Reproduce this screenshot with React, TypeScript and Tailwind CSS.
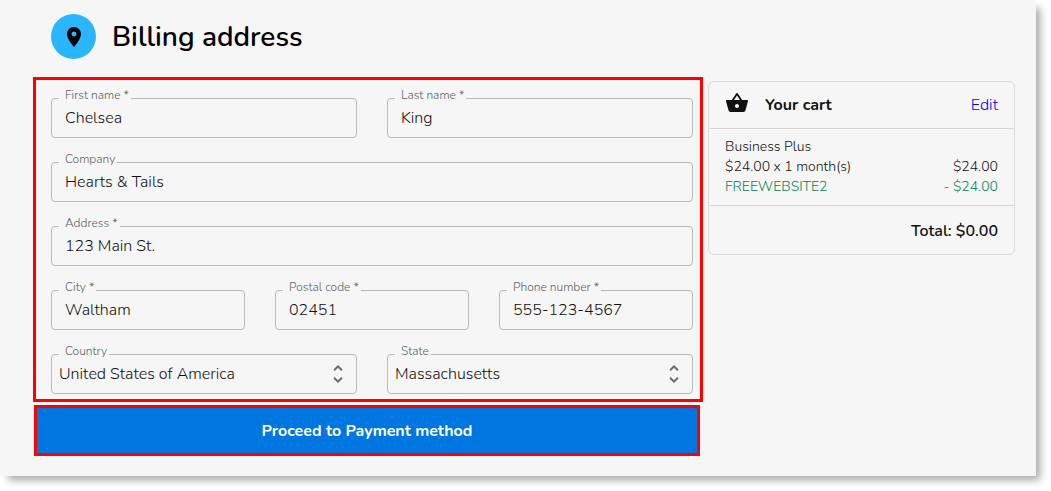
import React from "react";
import { MdLocationOn, MdShoppingBasket, MdUnfoldMore } from "react-icons/md";

interface FieldProps {
  id: string;
  label: string;
  value: string;
  required?: boolean;
  className?: string;
}

const FieldLabel = ({ id, label, required }: { id: string; label: string; required?: boolean }) => (
  <label
    htmlFor={id}
    className="absolute -top-3 left-2 bg-[#f6f6f6] pl-1.5 pr-0.5 text-[12px] leading-[18px] font-light text-[#606060]"
  >
    {label}
    {required && " *"}
  </label>
);

const TextField = ({ id, label, value, required, className = "" }: FieldProps) => (
  <div className={`relative ${className}`}>
    <input
      id={id}
      type="text"
      defaultValue={value}
      className="block h-10 w-full rounded border border-[#b9b9b9] bg-transparent px-[13px] text-base font-light text-[#111] outline-none focus:border-[#0077e0]"
    />
    <FieldLabel id={id} label={label} required={required} />
  </div>
);

const SelectField = ({ id, label, value, className = "" }: FieldProps) => (
  <div className={`relative ${className}`}>
    <select
      id={id}
      defaultValue={value}
      className="block h-10 w-full appearance-none rounded border border-[#b9b9b9] bg-transparent px-[7px] text-base font-light text-[#111] outline-none focus:border-[#0077e0]"
    >
      <option>{value}</option>
    </select>
    <MdUnfoldMore className="pointer-events-none absolute top-2 right-[7px] size-6 text-[#6b6b6b]" />
    <FieldLabel id={id} label={label} />
  </div>
);

const Cart = () => (
  <aside className="mt-1 w-[307px] shrink-0 rounded-md border border-[#dcdcdc] text-[#111]">
    <div className="flex h-[47px] items-center border-b border-[#d6d6d6] px-4">
      <MdShoppingBasket className="mb-1 size-6 text-[#111]" />
      <h2 className="ml-4 flex-1 text-base font-bold">Your cart</h2>
      <a href="#cart" className="text-base font-light text-[#0000ee]">
        Edit
      </a>
    </div>

    <div className="border-b border-[#d6d6d6] px-4 py-2 text-sm leading-5 font-light">
      <p>Business Plus</p>
      <p className="flex justify-between">
        <span>$24.00 x 1 month(s)</span>
        <span>$24.00</span>
      </p>
      <p className="flex justify-between text-[#008552]">
        <span>FREEWEBSITE2</span>
        <span>- $24.00</span>
      </p>
    </div>

    <p className="px-4 pt-[13px] pb-[11px] text-right text-base leading-6 font-semibold">Total: $0.00</p>
  </aside>
);

const App = () => {
  return (
    <div className="bg-white pr-[15px] pb-[15px] font-['Nunito','Open_Sans',sans-serif]">
      <main className="bg-[#f6f6f6] pt-3.5 pr-[21px] pb-5 pl-[33px] shadow-[6px_6px_8px_-2px_rgba(0,0,0,0.35)]">
        <header className="flex items-center gap-4 pl-[18px]">
          <span className="flex size-[45px] items-center justify-center rounded-full bg-[#29b6ff]">
            <MdLocationOn className="size-6 text-black" />
          </span>
          <h1 className="pt-0.5 text-[28px] leading-[43px] font-semibold text-black">Billing address</h1>
        </header>

        <div className="mt-[18px] flex items-start gap-[5px]">
          <form className="min-w-0 flex-1" onSubmit={(e) => e.preventDefault()}>
            <div className="grid grid-cols-6 gap-x-[30px] gap-y-6 border-3 border-[#ff0000] pt-[18px] pr-[7px] pb-[5px] pl-[15px]">
              <TextField id="first-name" label="First name" value="Chelsea" required className="col-span-3" />
              <TextField id="last-name" label="Last name" value="King" required className="col-span-3" />
              <TextField id="company" label="Company" value="Hearts & Tails" className="col-span-6" />
              <TextField id="address" label="Address" value="123 Main St." required className="col-span-6" />
              <TextField id="city" label="City" value="Waltham" required className="col-span-2" />
              <TextField id="postal-code" label="Postal code" value="02451" required className="col-span-2" />
              <TextField id="phone" label="Phone number" value="555-123-4567" required className="col-span-2" />
              <SelectField id="country" label="Country" value="United States of America" className="col-span-3" />
              <SelectField id="state" label="State" value="Massachusetts" className="col-span-3" />
            </div>

            <div className="mt-[3px] mr-[3px] ml-px">
              <button
                type="submit"
                className="block h-[51px] w-full border-3 border-[#ff0000] bg-[#0077e0] text-base font-bold text-white"
              >
                Proceed to Payment method
              </button>
            </div>
          </form>

          <Cart />
        </div>
      </main>
    </div>
  );
};

export default App;
